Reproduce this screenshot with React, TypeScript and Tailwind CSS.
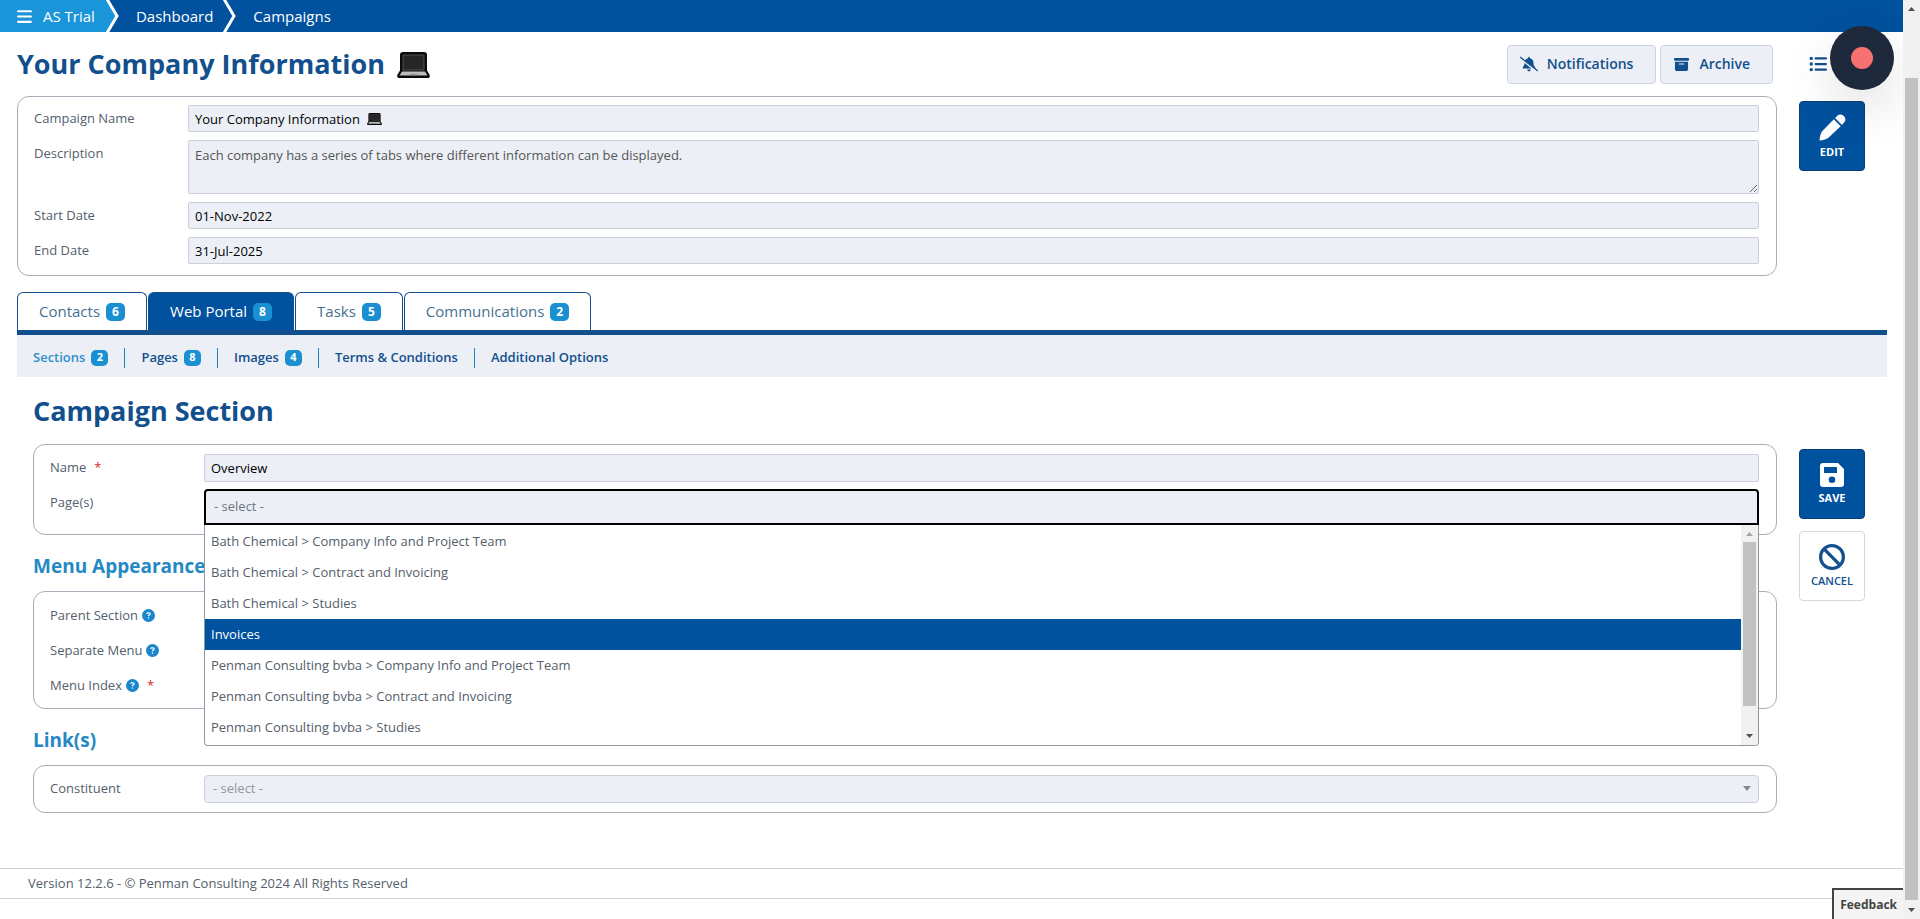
import type { ReactNode } from "react";
import { FaBan, FaBars, FaBellSlash, FaBoxArchive, FaCircleQuestion, FaListUl } from "react-icons/fa6";

const TABS = [
    { label: "Contacts",       count: 6, active: false },
    { label: "Web Portal",     count: 8, active: true },
    { label: "Tasks",          count: 5, active: false },
    { label: "Communications", count: 2, active: false },
];

const SUB_TABS = [
    { label: "Sections", count: 2, active: true },
    { label: "Pages", count: 8 },
    { label: "Images", count: 4 },
    { label: "Terms & Conditions" },
    { label: "Additional Options" },
];

const PAGES = [
    "Bath Chemical > Company Info and Project Team",
    "Bath Chemical > Contract and Invoicing",
    "Bath Chemical > Studies",
    "Invoices",
    "Penman Consulting bvba > Company Info and Project Team",
    "Penman Consulting bvba > Contract and Invoicing",
    "Penman Consulting bvba > Studies",
];

const field = "block w-full rounded-xs border border-[#c9d0da] bg-[#ecf0f6] px-[6px] text-[13px] outline-none";

function Laptop({ className }: { className: string }) {
    return (
        <svg viewBox="0 0 33 26" className={className} aria-hidden="true">
            <path d="M6 0h21a3 3 0 0 1 3 3v15.500l2.700 4.500v1.500a1.500 1.500 0 0 1-1.500 1.500H1.800A1.500 1.500 0 0 1 .3 24.500V23L3 18.500V3a3 3 0 0 1 3-3z" fill="#0b0b0b" />
            <path d="M6 3h21v15H6z" fill="#262626" stroke="#5a5a5a" strokeWidth="0.8" />
            <path d="M5 19.500h23l2.500 4h-28z" fill="#bdbdbd" />
            <path d="M13 22h7l.7 1.500h-8.400z" fill="#8c8c8c" />
        </svg>
    );
}

function Pencil() {
    return (
        <svg viewBox="0 0 27 27" className="size-[27px]" fill="currentColor" aria-hidden="true">
            <path d="M14.800 5.300l6.900 6.900L9.400 23.800C7.500 25.400 4.500 26.200.5 26.600c.2-4 1.100-7.300 2.700-9.300z" />
            <path d="M16.100 4l2.200-2.200c2-2 4.700-1.700 6.500.1 1.900 1.900 2.200 4.600.3 6.600L23 10.900z" />
        </svg>
    );
}

function Floppy() {
    return (
        <svg viewBox="0 0 24 24" className="size-6" fill="currentColor" aria-hidden="true">
            <path fillRule="evenodd" d="M3 0h15l6 6v15a3 3 0 0 1-3 3H3a3 3 0 0 1-3-3V3a3 3 0 0 1 3-3zM4 4v6h13V4zM12 13.500a3.300 3.300 0 1 0 0 6.600 3.300 3.300 0 0 0 0-6.600z" />
        </svg>
    );
}

function Chevron() {
    return (
        <svg viewBox="0 0 14 32" className="h-8 w-[14px] shrink-0" fill="none" aria-hidden="true">
            <path d="M1 -1 L11 16 L1 33" stroke="#fff" strokeWidth="3" />
        </svg>
    );
}

function Count({ value, className }: { value: number; className: string }) {
    return <span className={`inline-flex items-center justify-center rounded-[5px] bg-[#1a8fd1] font-bold text-white ${className}`}>{value}</span>;
}

function Panel({ children, className }: { children: ReactNode; className: string }) {
    return <div className={`rounded-xl border border-[#a5afba] pl-4 pr-[17px] ${className}`}>{children}</div>;
}

function Row({ id, label, required, help, children }: { id?: string; label: string; required?: boolean; help?: boolean; children?: ReactNode }) {
    return (
        <div className="flex">
            <label htmlFor={id} className="flex h-[27px] w-[154px] shrink-0 items-center text-[13px]">
                {label}
                {help && <FaCircleQuestion size={13} className="ml-1 text-[#1a86cb]" />}
                {required && <span className="ml-2 text-[#cf2a2a]">*</span>}
            </label>
            <div className="relative min-w-0 flex-1">{children}</div>
        </div>
    );
}

function SideButton({ icon, label, light }: { icon: ReactNode; label: string; light?: boolean }) {
    return (
        <button
            type="button"
            className={`flex h-[70px] w-[66px] flex-col items-center justify-center gap-1 rounded border text-[11px] leading-[14px] ${
                light ? "border-[#d3d8de] bg-white font-semibold text-[#124f8d]" : "border-[#0b3f73] bg-[#00519e] font-bold text-white"
            }`}
        >
            {icon}
            {label}
        </button>
    );
}

function PageList() {
    return (
        <div className="absolute inset-x-0 top-full z-10 flex h-[221px] overflow-hidden rounded-b border border-t-0 border-[#8f99a3] bg-white">
            <ul role="listbox" aria-label="Page(s)" className="min-w-0 flex-1 pt-px">
                {PAGES.map((page) => (
                    <li
                        key={page}
                        role="option"
                        aria-selected={page === "Invoices"}
                        className={`h-[31px] px-[6px] text-[13px] leading-[31px] ${page === "Invoices" ? "bg-[#00519e] text-white" : ""}`}
                    >
                        {page}
                    </li>
                ))}
            </ul>
            <div className="flex w-[17px] flex-col items-center bg-[#f1f1f1]">
                <svg viewBox="0 0 17 17" className="size-[17px]" aria-hidden="true"><path d="M5 11l3.5-4 3.5 4z" fill="#a3a3a3" /></svg>
                <div className="h-[164px] w-[13px] bg-[#c1c1c1]" />
                <svg viewBox="0 0 17 17" className="mt-auto size-[17px]" aria-hidden="true"><path d="M5 6l3.5 4L12 6z" fill="#505050" /></svg>
            </div>
        </div>
    );
}

export default function App() {
    return (
        <div className="flex min-h-screen bg-white font-['Open_Sans',sans-serif] text-[#53606c]">
            <div className="relative min-w-0 flex-1 overflow-hidden">
                <nav className="flex h-8 items-center bg-[#00519e] text-[15px] text-white">
                    <a href="#menu" className="flex h-8 items-center gap-[10px] bg-[#1a95d9] pl-4 pr-[11px]">
                        <FaBars size={17} />
                        AS Trial
                    </a>
                    <div className="relative flex items-center">
                        <svg viewBox="0 0 11 32" className="absolute left-0 top-0 h-8 w-[11px]" aria-hidden="true"><path d="M0 0h1l10 16L1 32H0z" fill="#1a95d9" /></svg>
                        <span className="relative"><Chevron /></span>
                        <a href="#dashboard" className="pl-4 pr-[10px]">Dashboard</a>
                        <Chevron />
                        <a href="#campaigns" className="px-4">Campaigns</a>
                    </div>
                </nav>

                <header className="flex h-16 items-center pl-[17px] pr-[38px]">
                    <h1 className="flex items-center text-[27px] font-bold text-[#124f8d]">
                        Your Company Information
                        <Laptop className="ml-3 mt-[2px] h-[26px] w-[33px]" />
                    </h1>
                    <div className="ml-auto flex items-center gap-1 font-semibold text-[#124f8d]">
                        <button type="button" className="flex h-[39px] items-center gap-[9px] rounded border border-[#ccd4de] bg-[#ecf0f6] pl-3 pr-[22px] text-sm">
                            <FaBellSlash size={18} />
                            Notifications
                        </button>
                        <button type="button" className="flex h-[39px] items-center gap-[10px] rounded border border-[#ccd4de] bg-[#ecf0f6] pl-[13px] pr-[22px] text-sm">
                            <FaBoxArchive size={15} />
                            Archive
                        </button>
                        <button type="button" aria-label="List" className="ml-8 w-[56px]">
                            <FaListUl size={18} />
                        </button>
                    </div>
                </header>

                <section className="flex gap-[22px] pl-[17px] pr-[38px]">
                    <Panel className="min-w-0 flex-1 pb-[11px] pt-2">
                        <div className="flex flex-col gap-2">
                            <Row id="campaign" label="Campaign Name">
                                <input id="campaign" readOnly defaultValue="Your Company Information" className={`${field} h-[27px] text-black`} />
                                <Laptop className="absolute left-[179px] top-[8px] h-3 w-[15px]" />
                            </Row>
                            <Row id="description" label="Description">
                                <textarea
                                    id="description"
                                    readOnly
                                    defaultValue="Each company has a series of tabs where different information can be displayed."
                                    className={`${field} h-[54px] py-1 leading-5 text-[#555]`}
                                />
                            </Row>
                            <Row id="start" label="Start Date">
                                <input id="start" readOnly defaultValue="01-Nov-2022" className={`${field} h-[27px] text-black`} />
                            </Row>
                            <Row id="end" label="End Date">
                                <input id="end" readOnly defaultValue="31-Jul-2025" className={`${field} h-[27px] text-black`} />
                            </Row>
                        </div>
                    </Panel>
                    <div className="pt-[5px]">
                        <SideButton icon={<Pencil />} label="EDIT" />
                    </div>
                </section>

                <div className="ml-[17px] mr-4 mt-4">
                    <div className="flex gap-px border-b-[5px] border-[#124f8d]">
                        {TABS.map(({ label, count, active }) => (
                            <a
                                key={label}
                                href="#tab"
                                className={`flex h-[38px] items-center gap-[6px] rounded-t-md border border-b-0 border-[#124f8d] px-[21px] text-[15px] ${active ? "bg-[#00519e] text-white" : "text-[#47708f]"}`}
                            >
                                {label}
                                <Count value={count} className="h-[18px] w-[19px] text-xs" />
                            </a>
                        ))}
                    </div>
                    <div className="flex h-[42px] items-center bg-[#ecf0f6] pt-[3px]">
                        {SUB_TABS.map(({ label, count, active }, i) => (
                            <a
                                key={label}
                                href="#sub"
                                className={`flex h-5 items-center gap-[6px] px-4 text-[13px] font-semibold ${i > 0 ? "border-l border-[#2580b8]" : ""} ${active ? "text-[#2b8fca]" : "text-[#124f8d]"}`}
                            >
                                {label}
                                {count && <Count value={count} className="h-4 w-[17px] text-[11px]" />}
                            </a>
                        ))}
                    </div>
                </div>

                <section className="pl-[33px] pr-[38px]">
                    <h2 className="flex h-[67px] items-center pt-[2px] text-[27px] font-bold text-[#124f8d]">Campaign Section</h2>
                    <div className="flex gap-[22px]">
                        <div className="min-w-0 flex-1">
                            <Panel className="pb-[9px] pt-[9px]">
                                <div className="flex flex-col gap-[7px]">
                                    <Row id="name" label="Name" required>
                                        <input id="name" readOnly defaultValue="Overview" className={`${field} h-[28px] text-black`} />
                                    </Row>
                                    <Row id="pages" label="Page(s)">
                                        <select id="pages" className="block h-9 w-full appearance-none rounded-t-sm border-2 border-black bg-[#ecf0f6] px-2 text-[13px] text-[#6d7680] outline-none">
                                            <option>- select -</option>
                                        </select>
                                        <PageList />
                                    </Row>
                                </div>
                            </Panel>
                            <h3 className="flex h-14 items-center pt-[6px] text-[19px] font-bold text-[#2488c4]">Menu Appearance</h3>
                            <Panel className="pb-[9px] pt-[10px]">
                                <div className="flex flex-col gap-2">
                                    <Row label="Parent Section" help />
                                    <Row label="Separate Menu" help />
                                    <Row label="Menu Index" help required />
                                </div>
                            </Panel>
                            <h3 className="flex h-14 items-center pt-[6px] text-[19px] font-bold text-[#2488c4]">Link(s)</h3>
                            <Panel className="py-[9px]">
                                <Row id="constituent" label="Constituent">
                                    <select id="constituent" className="block h-[28px] w-full appearance-none rounded-sm border border-[#c9d0da] bg-[#ecf0f6] px-2 text-[13px] text-[#9096a0] outline-none">
                                        <option>- select -</option>
                                    </select>
                                    <svg viewBox="0 0 8 5" className="pointer-events-none absolute right-2 top-[11px] h-[5px] w-2" aria-hidden="true"><path d="M0 0h8L4 5z" fill="#888" /></svg>
                                </Row>
                            </Panel>
                        </div>
                        <div className="flex flex-col gap-3 pt-[5px]">
                            <SideButton icon={<Floppy />} label="SAVE" />
                            <SideButton light icon={<FaBan size={26} />} label="CANCEL" />
                        </div>
                    </div>
                </section>

                <footer className="mt-[55px] border-y border-[#cfcfcf] px-7 text-[13px] leading-[29px]">
                    Version 12.2.6 - © Penman Consulting 2024 All Rights Reserved
                </footer>

                <button type="button" aria-label="Record" className="absolute right-[9px] top-[26px] flex size-16 items-center justify-center rounded-full bg-[#1e293b] shadow-[0_20px_50px_rgba(0,0,0,0.12)]">
                    <span className="size-[22px] rounded-full bg-[#f87171]" />
                </button>
                <button type="button" className="absolute bottom-0 right-0 h-[31px] border-l-2 border-t-2 border-[#444] bg-[#f4f4f4] px-[6px] text-xs font-bold text-[#444]">
                    Feedback
                </button>
            </div>

            <div className="flex w-[17px] flex-col items-center bg-[#f1f1f1]">
                <svg viewBox="0 0 17 17" className="size-[17px]" aria-hidden="true"><path d="M5 11l3.5-4 3.5 4z" fill="#505050" /></svg>
                <div className="mt-[61px] w-[13px] flex-1 bg-[#c1c1c1]" />
                <svg viewBox="0 0 17 17" className="mt-[2px] size-[17px]" aria-hidden="true"><path d="M5 6l3.5 4L12 6z" fill="#505050" /></svg>
            </div>
        </div>
    );
}
